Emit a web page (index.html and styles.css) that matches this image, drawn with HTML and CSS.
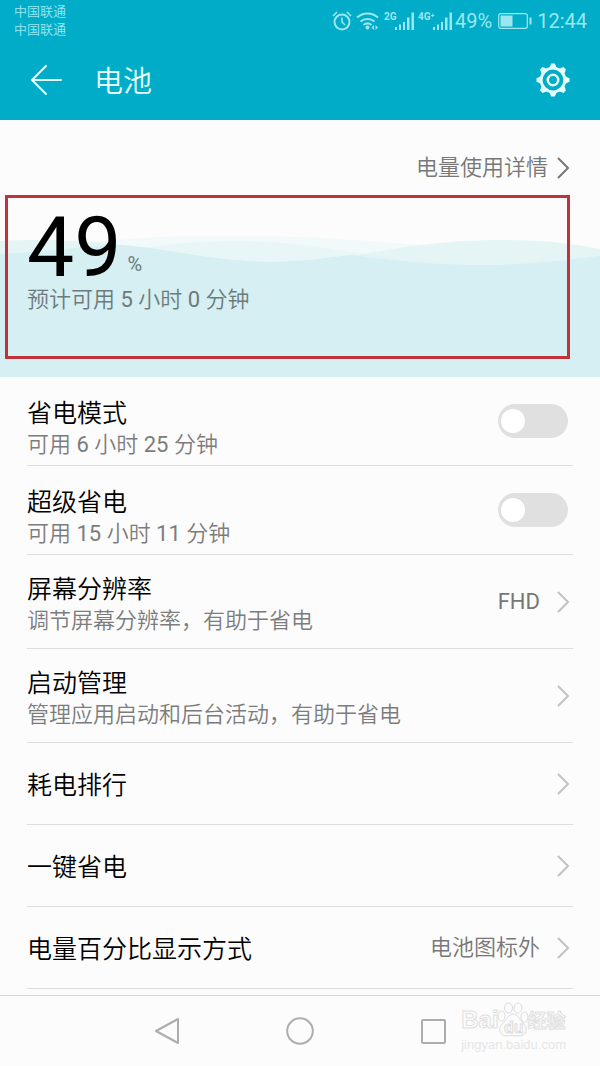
FILE: index.html
```html
<!DOCTYPE html>
<html lang="zh-CN">
<head>
<meta charset="utf-8">
<meta name="viewport" content="width=device-width, initial-scale=1">
<title>电池</title>
<link rel="stylesheet" href="styles.css">
</head>
<body>
<div class="screen">
  <header class="header">
    <div class="status">
      <div class="carriers"><span>中国联通</span><span>中国联通</span></div>
      <div class="indicators">
        <svg class="status-icons" width="124" height="24" viewBox="0 0 124 24" aria-hidden="true">
          <g fill="none" stroke="currentColor" stroke-width="2">
            <circle cx="11" cy="13" r="7.500"/>
            <path d="M11 8.500V13l3 3" stroke-width="1.600"/>
            <path d="M2 7l4-4M20 7l-4-4" stroke-width="1.600"/>
            <path d="M26 8.500c6-5.500 15-5.500 21 0M29.500 12.500c4-3.500 10-3.500 14 0M32.500 16c2.500-2 5.500-2 8 0"/>
          </g>
          <g fill="currentColor">
            <circle cx="36.500" cy="18.500" r="2"/>
            <path d="M43 16v5l-2.500-2.500zM44.500 16v5l2.500-2.500z"/>
            <path d="M64 18h2v3h-2zM68 15.500h2V21h-2zM72 13h2v8h-2zM76 8.500h2.500V21h-2.500zM80.500 3.500h2.500V21h-2.500zM102 18h2v3h-2zM106 15.500h2V21h-2zM110 13h2v8h-2zM114 8.500h2.500V21h-2.500zM118.500 3.500h2.500V21h-2.500z"/>
            <text class="network" x="53" y="11">2G</text>
            <text class="network" x="87" y="11">4G⁺</text>
          </g>
        </svg>
        <span>49%</span>
        <svg class="battery" width="34" height="18" viewBox="0 0 34 18" aria-hidden="true">
          <rect x=".7" y="1.700" width="28.600" height="14.600" rx="2" fill="none" stroke="currentColor" stroke-width="1.200"/>
          <path d="M2.500 3.500h12v11h-12zM31.500 5.500h2v7h-2z" fill="currentColor"/>
        </svg>
        <span>12:44</span>
      </div>
    </div>
    <div class="appbar">
      <button class="icon-button" type="button" aria-label="返回">
        <svg width="32" height="32" viewBox="0 0 32 32"><path d="M31 16H2M16 2L2 16l14 14" fill="none" stroke="currentColor" stroke-width="2" stroke-linecap="round" stroke-linejoin="round"/></svg>
      </button>
      <h1 class="title">电池</h1>
      <button class="icon-button" type="button" aria-label="设置">
        <svg width="34" height="34" viewBox="0 0 34 34">
          <g fill="none" stroke="currentColor">
            <circle cx="17" cy="17" r="11.800" stroke-width="2.800"/>
            <circle cx="17" cy="17" r="5.200" stroke-width="2.600"/>
          </g>
          <path id="tooth" d="M13 5.500L15.200 .5h3.600L21 5.500z" fill="currentColor"/>
          <g fill="currentColor">
            <use href="#tooth" transform="rotate(45 17 17)"/><use href="#tooth" transform="rotate(90 17 17)"/><use href="#tooth" transform="rotate(135 17 17)"/><use href="#tooth" transform="rotate(180 17 17)"/><use href="#tooth" transform="rotate(225 17 17)"/><use href="#tooth" transform="rotate(270 17 17)"/><use href="#tooth" transform="rotate(315 17 17)"/>
          </g>
        </svg>
      </button>
    </div>
  </header>

  <main class="content">
    <section class="summary">
      <svg class="waves" viewBox="0 0 600 141" preserveAspectRatio="none" aria-hidden="true">
        <path class="wave wave-back" d="M0 5C40 3 80 8 120 4C240-8 420 6 520 21C550 25 580 22 600 20V141H0z"/>
        <path class="wave wave-mid" d="M0 5C40 3 85 4 120 9C180 14 210 25 270 26C360 26 400 4 500 4C550 4 580 9 600 13V141H0z"/>
        <path class="wave wave-front" d="M0 26C100 26 140 5 240 5C330 6 390 29 480 29C530 29 560 23 600 20V141H0z"/>
        <path class="wave-body" d="M0 18C50 16 80 10 120 9C180 14 210 25 270 26C300 26 325 22 350 19C400 25 430 29 480 29C530 29 560 25 600 20V141H0z"/>
      </svg>
      <a class="details" href="#ranking">电量使用详情
        <svg class="chevron" width="14" height="24" viewBox="0 0 14 24" aria-hidden="true"><path d="M2 2l10 10L2 22"/></svg>
      </a>
      <div class="level"><span class="level-number">49</span><span class="level-unit">%</span></div>
      <p class="estimate">预计可用 5 小时 0 分钟</p>
      <div class="highlight"></div>
    </section>

    <div class="list">
      <label class="row row-switch">
        <span class="row-text"><span class="row-title">省电模式</span><span class="row-note">可用 6 小时 25 分钟</span></span>
        <input class="switch" type="checkbox" role="switch">
      </label>
      <label class="row row-switch">
        <span class="row-text"><span class="row-title">超级省电</span><span class="row-note">可用 15 小时 11 分钟</span></span>
        <input class="switch" type="checkbox" role="switch">
      </label>
      <a class="row row-double" href="#resolution">
        <span class="row-text"><span class="row-title">屏幕分辨率</span><span class="row-note">调节屏幕分辨率，有助于省电</span></span>
        <span class="row-value">FHD</span>
        <svg class="chevron" width="14" height="24" viewBox="0 0 14 24" aria-hidden="true"><path d="M2 2l10 10L2 22"/></svg>
      </a>
      <a class="row row-double" href="#launch">
        <span class="row-text"><span class="row-title">启动管理</span><span class="row-note">管理应用启动和后台活动，有助于省电</span></span>
        <svg class="chevron" width="14" height="24" viewBox="0 0 14 24" aria-hidden="true"><path d="M2 2l10 10L2 22"/></svg>
      </a>
      <a class="row row-single" id="ranking" href="#ranking">
        <span class="row-text"><span class="row-title">耗电排行</span></span>
        <svg class="chevron" width="14" height="24" viewBox="0 0 14 24" aria-hidden="true"><path d="M2 2l10 10L2 22"/></svg>
      </a>
      <a class="row row-single" href="#saver">
        <span class="row-text"><span class="row-title">一键省电</span></span>
        <svg class="chevron" width="14" height="24" viewBox="0 0 14 24" aria-hidden="true"><path d="M2 2l10 10L2 22"/></svg>
      </a>
      <a class="row row-single" href="#percentage">
        <span class="row-text"><span class="row-title">电量百分比显示方式</span></span>
        <span class="row-value">电池图标外</span>
        <svg class="chevron" width="14" height="24" viewBox="0 0 14 24" aria-hidden="true"><path d="M2 2l10 10L2 22"/></svg>
      </a>
    </div>
  </main>

  <nav class="navbar">
    <button class="nav-button" type="button" aria-label="后退"><svg width="28" height="28" viewBox="0 0 28 28"><path d="M25 2v24L3 14z"/></svg></button>
    <button class="nav-button" type="button" aria-label="主页"><svg width="28" height="28" viewBox="0 0 28 28"><circle cx="14" cy="14" r="12.800"/></svg></button>
    <button class="nav-button" type="button" aria-label="最近任务"><svg width="28" height="28" viewBox="0 0 28 28"><rect x="3" y="3" width="23" height="23" rx="1"/></svg></button>
    <div class="watermark">
      <div class="mark-brand"><span>Bai</span>
        <svg width="32" height="36" viewBox="0 0 32 36" aria-hidden="true">
          <g class="paw"><ellipse cx="11.500" cy="6" rx="4" ry="5"/><ellipse cx="21" cy="6" rx="4" ry="5"/><ellipse cx="4.500" cy="14" rx="3.500" ry="5"/><ellipse cx="27.500" cy="15" rx="3.500" ry="5"/><path d="M16 12c5 0 6 5 10 9c5 5 4 13-4 13c-4 0-8-1-12 0c-8 0-9-8-5-12c4-3 6-10 11-10z"/></g>
          <text class="paw-text" x="7" y="31">du</text>
        </svg>
        <span class="mark-cn">经验</span></div>
      <div class="mark-url">jingyan.baidu.com</div>
    </div>
  </nav>
</div>
</body>
</html>
```

FILE: styles.css
```css
* {
  box-sizing: border-box;
}

body {
  margin: 0;
  background: #fcfcfc;
  color: #000;
  font-family: Roboto, "Noto Sans CJK SC DemiLight", "Noto Sans CJK SC", sans-serif;
  font-weight: 400;
}

a {
  color: inherit;
  text-decoration: none;
}

button {
  padding: 0;
  border: 0;
  background: none;
  color: inherit;
  display: flex;
}

.screen {
  min-height: 100vh;
  display: flex;
  flex-direction: column;
}

.header {
  background: #00acc7;
  color: #e6ffff;
}

.status {
  display: flex;
  justify-content: space-between;
  height: 40px;
  padding: 3px 13px 0 14px;
  color: #9be7f0;
}

.carriers {
  display: flex;
  flex-direction: column;
  font-size: 13px;
  line-height: 18px;
  font-weight: 350;
}

.indicators {
  display: flex;
  align-items: center;
  height: 36px;
  font-size: 20px;
}

.network {
  font-size: 10px;
  font-weight: 700;
}

.battery {
  margin: 0 5px 0 6px;
}

.appbar {
  display: flex;
  align-items: center;
  height: 80px;
  padding: 0 30px;
}

.title {
  flex: 1;
  margin: 0 0 0 32px;
  padding-top: 4px;
  font-size: 29px;
  line-height: 40px;
  font-weight: 350;
}

.content {
  flex: 1;
}

.summary {
  position: relative;
  height: 257px;
  padding: 32px 30px 0 27px;
  color: #6d7a7c;
}

.waves {
  position: absolute;
  left: 0;
  bottom: 0;
  width: 100%;
  height: 141px;
}

.wave-back {
  fill: #f1f9fa;
}

.wave-mid {
  fill: #e5f5f6;
}

.wave-front {
  fill: #e1f3f5;
  fill-opacity: 0.500;
}

.wave-body {
  fill: #d5eff2;
}

.details {
  position: relative;
  display: flex;
  align-items: center;
  justify-content: flex-end;
  gap: 8px;
  font-size: 22px;
  line-height: 32px;
  font-weight: 350;
  color: #777;
}

.chevron {
  flex: none;
  fill: none;
  stroke: #c2c2c2;
  stroke-width: 2;
}

.details .chevron {
  stroke: #777;
}

.level {
  position: relative;
  display: flex;
  align-items: flex-end;
  gap: 6px;
  margin-top: 28px;
}

.level-number {
  font-size: 84px;
  line-height: 72px;
  color: #000;
}

.level-unit {
  font-size: 20px;
  line-height: 40px;
}

.estimate {
  position: relative;
  margin: 0;
  font-size: 22px;
  line-height: 32px;
}

.highlight {
  position: absolute;
  top: 75px;
  left: 5px;
  right: 30px;
  height: 164px;
  border: 3px solid #c0333a;
}

.list {
  padding: 0 27px 6px;
}

.row {
  display: flex;
  align-items: center;
  border-bottom: 1px solid #dedede;
  padding-right: 3px;
}

.row-text {
  flex: 1;
  display: flex;
  flex-direction: column;
  line-height: 31px;
}

.row-switch {
  padding-right: 5px;
}

.row-switch .row-text {
  padding: 21px 0 5px;
}

.row-double .row-text {
  padding: 19px 0 12px;
}

.row-single .row-text {
  padding: 27px 0 23px;
}

.row-title {
  font-size: 25px;
  font-weight: 350;
}

.row-note {
  font-size: 22px;
  color: #7c7c7c;
}

.row-value {
  margin-right: 16px;
  font-size: 22px;
  line-height: 31px;
  color: #777;
}

.switch {
  appearance: none;
  flex: none;
  width: 70px;
  height: 34px;
  margin: 0;
  padding: 5px 3px;
  border-radius: 17px;
  background: #e0e0e0;
}

.switch::before {
  content: "";
  display: block;
  width: 24px;
  height: 24px;
  border-radius: 50%;
  background: #fff;
}

.switch:checked {
  background: #00acc7;
}

.switch:checked::before {
  margin-left: auto;
}

.navbar {
  position: relative;
  display: flex;
  align-items: center;
  justify-content: center;
  gap: 105px;
  height: 72px;
  padding-bottom: 2px;
  border-top: 1px solid #d6d6d6;
}

.nav-button svg {
  fill: none;
  stroke: #adadad;
  stroke-width: 2;
  stroke-linejoin: round;
}

.watermark {
  position: absolute;
  right: 34px;
  top: 6px;
  color: #fcfcfc;
  -webkit-text-stroke: 1px #e0e0e0;
}

.mark-brand {
  display: flex;
  align-items: center;
  height: 36px;
  font: 700 24px/36px "Liberation Sans", sans-serif;
}

.mark-brand svg {
  margin: 0 -1px 0 -2px;
}

.mark-cn {
  font: 700 19px/36px "Noto Sans CJK SC", sans-serif;
}

.mark-url {
  font: 400 13px/14px "Liberation Sans", sans-serif;
  color: #e6e6e6;
  -webkit-text-stroke: 0;
}

.paw {
  fill: #fcfcfc;
  stroke: #dcdcdc;
}

.paw-text {
  font-size: 16px;
  fill: #fcfcfc;
  stroke: #dcdcdc;
  stroke-width: 1;
}
```
